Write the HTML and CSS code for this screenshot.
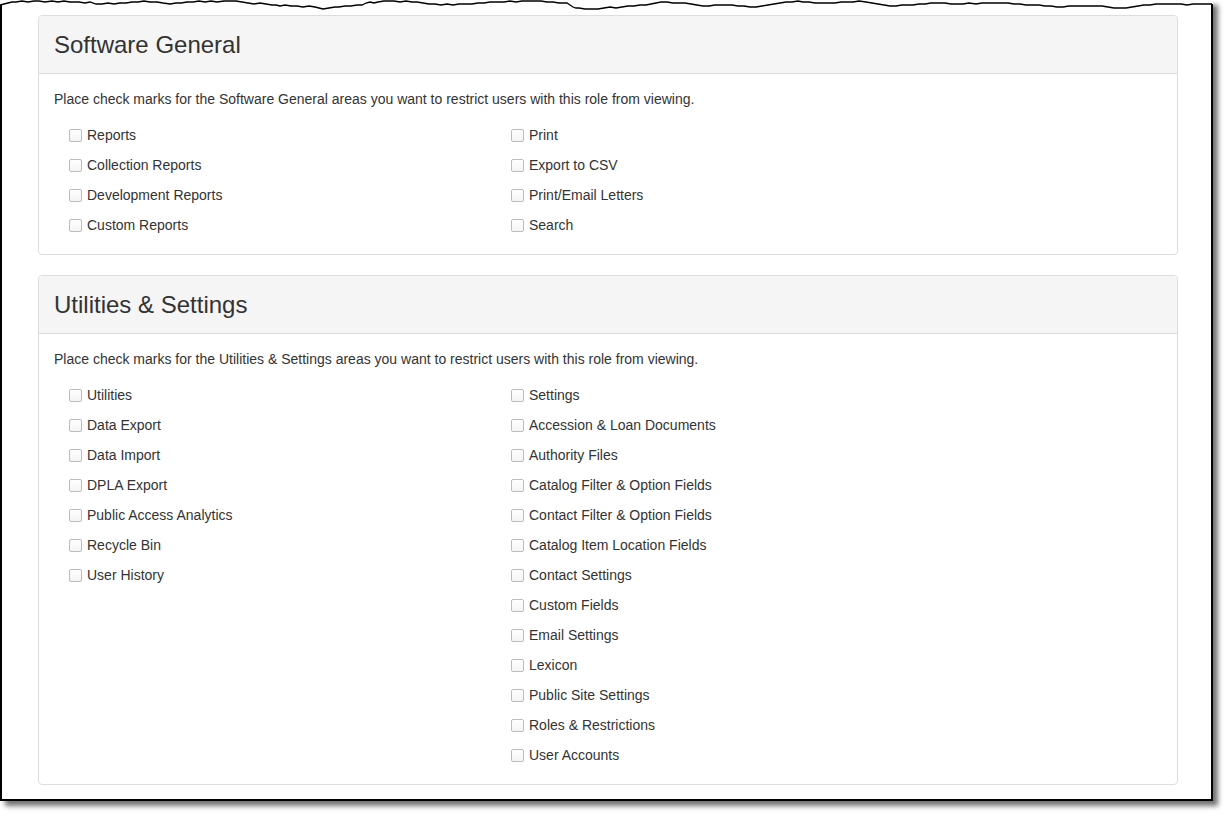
FILE: index.html
```html
<!DOCTYPE html>
<html lang="en">
<head>
<meta charset="utf-8">
<title>Roles &amp; Restrictions</title>
<link rel="stylesheet" href="styles.css">
</head>
<body>
<div class="frame">
  <svg class="tear" width="1213" height="12" viewBox="0 0 1213 12" aria-hidden="true">
    <polygon class="tear-fill" points="0,0 0,5 4,4 8,3 12,2 16,2 22,1 28,2 34,1 39,1 45,2 52,1 58,2 64,1 70,2 79,2 85,3 90,2 96,4 102,4 108,3 114,4 120,3 126,3 132,2 138,2 144,1 150,2 157,2 163,3 170,4 176,3 181,3 187,2 193,2 199,1 205,2 211,1 217,2 224,1 230,1 236,1 242,2 248,3 254,4 260,3 266,4 272,5 276,5 280,6 285,5 291,6 297,6 303,7 309,6 315,7 319,8 323,9 329,8 335,7 339,7 345,6 351,6 357,5 362,5 366,3 370,2 374,3 378,2 384,1 390,1 394,1 400,2 406,1 412,2 417,2 423,3 429,4 435,4 441,5 447,4 453,5 459,4 465,4 472,4 478,3 484,3 490,2 496,2 504,2 510,1 516,2 522,1 528,1 535,1 541,1 547,2 553,2 559,3 565,3 567,3 570,5 573,7 576,8 579,8 585,9 591,9 598,9 604,8 610,7 616,8 622,7 628,6 634,6 640,5 646,5 651,4 656,3 661,2 667,2 673,3 679,3 685,3 691,4 697,5 703,6 709,6 715,5 721,5 727,5 732,5 738,6 744,6 750,7 756,7 762,6 768,5 774,4 780,3 786,2 792,2 798,1 803,2 809,2 815,3 821,3 828,3 835,3 841,2 847,2 853,2 859,1 866,2 872,3 878,4 884,5 890,6 896,6 902,5 908,5 913,5 919,4 925,4 931,3 938,3 945,3 951,4 957,4 963,4 969,3 976,4 982,3 988,3 994,3 1000,3 1008,3 1014,4 1020,4 1026,5 1032,5 1039,5 1045,6 1051,6 1057,7 1063,7 1069,6 1075,6 1081,6 1087,6 1094,6 1102,6 1108,7 1114,8 1120,8 1126,8 1132,7 1138,6 1144,5 1150,5 1156,4 1162,4 1168,4 1175,4 1181,4 1187,5 1193,4 1199,4 1205,4 1213,4 1213,0"/>
    <polyline class="tear-line" points="0,5 4,4 8,3 12,2 16,2 22,1 28,2 34,1 39,1 45,2 52,1 58,2 64,1 70,2 79,2 85,3 90,2 96,4 102,4 108,3 114,4 120,3 126,3 132,2 138,2 144,1 150,2 157,2 163,3 170,4 176,3 181,3 187,2 193,2 199,1 205,2 211,1 217,2 224,1 230,1 236,1 242,2 248,3 254,4 260,3 266,4 272,5 276,5 280,6 285,5 291,6 297,6 303,7 309,6 315,7 319,8 323,9 329,8 335,7 339,7 345,6 351,6 357,5 362,5 366,3 370,2 374,3 378,2 384,1 390,1 394,1 400,2 406,1 412,2 417,2 423,3 429,4 435,4 441,5 447,4 453,5 459,4 465,4 472,4 478,3 484,3 490,2 496,2 504,2 510,1 516,2 522,1 528,1 535,1 541,1 547,2 553,2 559,3 565,3 567,3 570,5 573,7 576,8 579,8 585,9 591,9 598,9 604,8 610,7 616,8 622,7 628,6 634,6 640,5 646,5 651,4 656,3 661,2 667,2 673,3 679,3 685,3 691,4 697,5 703,6 709,6 715,5 721,5 727,5 732,5 738,6 744,6 750,7 756,7 762,6 768,5 774,4 780,3 786,2 792,2 798,1 803,2 809,2 815,3 821,3 828,3 835,3 841,2 847,2 853,2 859,1 866,2 872,3 878,4 884,5 890,6 896,6 902,5 908,5 913,5 919,4 925,4 931,3 938,3 945,3 951,4 957,4 963,4 969,3 976,4 982,3 988,3 994,3 1000,3 1008,3 1014,4 1020,4 1026,5 1032,5 1039,5 1045,6 1051,6 1057,7 1063,7 1069,6 1075,6 1081,6 1087,6 1094,6 1102,6 1108,7 1114,8 1120,8 1126,8 1132,7 1138,6 1144,5 1150,5 1156,4 1162,4 1168,4 1175,4 1181,4 1187,5 1193,4 1199,4 1205,4 1212,4"/>
  </svg>

  <section class="panel">
    <div class="panel-heading"><h2 class="panel-title">Software General</h2></div>
    <div class="panel-body">
      <p class="intro">Place check marks for the Software General areas you want to restrict users with this role from viewing.</p>
      <div class="columns">
        <ul class="col">
          <li class="item"><span class="box"></span>Reports</li>
          <li class="item"><span class="box"></span>Collection Reports</li>
          <li class="item"><span class="box"></span>Development Reports</li>
          <li class="item"><span class="box"></span>Custom Reports</li>
        </ul>
        <ul class="col">
          <li class="item"><span class="box"></span>Print</li>
          <li class="item"><span class="box"></span>Export to CSV</li>
          <li class="item"><span class="box"></span>Print/Email Letters</li>
          <li class="item"><span class="box"></span>Search</li>
        </ul>
      </div>
    </div>
  </section>

  <section class="panel">
    <div class="panel-heading"><h2 class="panel-title">Utilities &amp; Settings</h2></div>
    <div class="panel-body">
      <p class="intro">Place check marks for the Utilities &amp; Settings areas you want to restrict users with this role from viewing.</p>
      <div class="columns">
        <ul class="col">
          <li class="item"><span class="box"></span>Utilities</li>
          <li class="item"><span class="box"></span>Data Export</li>
          <li class="item"><span class="box"></span>Data Import</li>
          <li class="item"><span class="box"></span>DPLA Export</li>
          <li class="item"><span class="box"></span>Public Access Analytics</li>
          <li class="item"><span class="box"></span>Recycle Bin</li>
          <li class="item"><span class="box"></span>User History</li>
        </ul>
        <ul class="col">
          <li class="item"><span class="box"></span>Settings</li>
          <li class="item"><span class="box"></span>Accession &amp; Loan Documents</li>
          <li class="item"><span class="box"></span>Authority Files</li>
          <li class="item"><span class="box"></span>Catalog Filter &amp; Option Fields</li>
          <li class="item"><span class="box"></span>Contact Filter &amp; Option Fields</li>
          <li class="item"><span class="box"></span>Catalog Item Location Fields</li>
          <li class="item"><span class="box"></span>Contact Settings</li>
          <li class="item"><span class="box"></span>Custom Fields</li>
          <li class="item"><span class="box"></span>Email Settings</li>
          <li class="item"><span class="box"></span>Lexicon</li>
          <li class="item"><span class="box"></span>Public Site Settings</li>
          <li class="item"><span class="box"></span>Roles &amp; Restrictions</li>
          <li class="item"><span class="box"></span>User Accounts</li>
        </ul>
      </div>
    </div>
  </section>
</div>
</body>
</html>
```

FILE: styles.css
```css
* { box-sizing: border-box; }

html, body {
  margin: 0;
  padding: 0;
  background: #ffffff;
}

body {
  width: 1227px;
  height: 816px;
  overflow: hidden;
  font-family: "Liberation Sans", Arial, Helvetica, sans-serif;
  font-size: 14px;
  line-height: 20px;
  color: #333333;
}

.frame {
  position: relative;
  width: 1213px;
  height: 801px;
  border: 2px solid #000000;
  border-top: none;
  background: #ffffff;
  box-shadow: 5px 5px 5px rgba(0, 0, 0, 0.55);
  padding: 15px 0 0 36px;
}

.tear {
  position: absolute;
  top: 0;
  left: -2px;
  display: block;
}

.tear-fill { fill: #ffffff; stroke: none; }
.tear-line { fill: none; stroke: #000000; stroke-width: 1.3; stroke-linejoin: miter; }

.panel {
  width: 1140px;
  border: 1px solid #dddddd;
  border-radius: 4px;
  background: #ffffff;
  margin-bottom: 20px;
}

.panel-heading {
  height: 58px;
  background: #f5f5f5;
  border-bottom: 1px solid #dddddd;
  border-radius: 3px 3px 0 0;
  padding: 0 15px;
  display: flex;
  align-items: center;
}

.panel-title {
  margin: 0;
  font-size: 24px;
  font-weight: normal;
  line-height: 28px;
  color: #333333;
}

.panel-body {
  padding: 15px 15px 14px 15px;
}

.intro {
  margin: 0 0 11px 0;
}

.columns {
  display: grid;
  grid-template-columns: 442px 442px;
  padding-left: 15px;
}

.col {
  list-style: none;
  margin: 0;
  padding: 0;
}

.item {
  height: 30px;
  display: flex;
  align-items: center;
}

.box {
  width: 13px;
  height: 13px;
  border: 1px solid #bcbcbc;
  border-radius: 2px;
  background: linear-gradient(#ffffff, #f4f4f4);
  margin-right: 5px;
  flex: none;
}
```
